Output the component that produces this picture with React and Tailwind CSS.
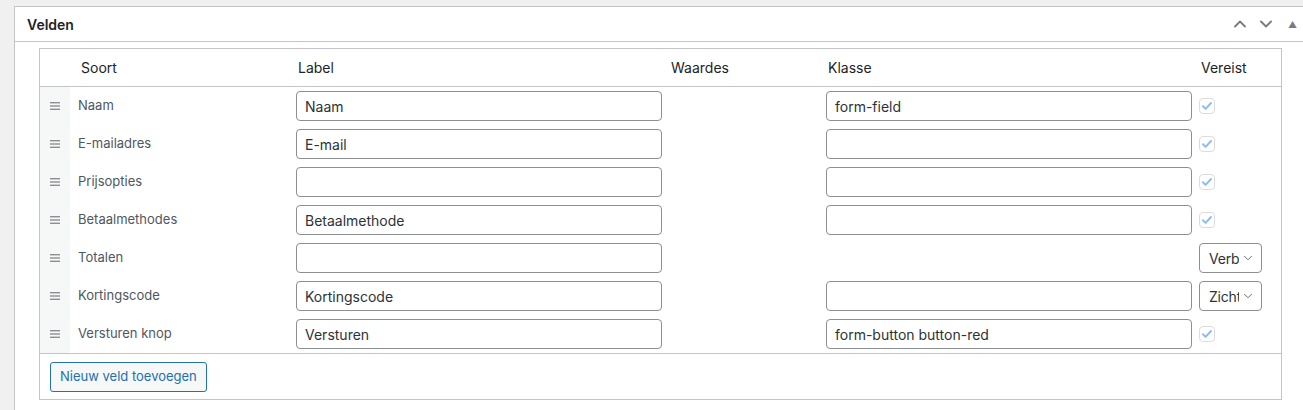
import { ChevronDown, ChevronUp } from "lucide-react"

const FIELDS = [
  { type: "Naam", label: "Naam", cls: "form-field", required: "check" },
  { type: "E-mailadres", label: "E-mail", cls: "", required: "check" },
  { type: "Prijsopties", label: "", cls: "", required: "check" },
  { type: "Betaalmethodes", label: "Betaalmethode", cls: "", required: "check" },
  { type: "Totalen", label: "", cls: null, required: "Verb" },
  { type: "Kortingscode", label: "Kortingscode", cls: "", required: "Zichtbaar" },
  { type: "Versturen knop", label: "Versturen", cls: "form-button button-red", required: "check" },
]

const COLS = "grid grid-cols-[30px_218px_375px_155px_373px_1fr]"

function TextInput({ value }) {
  return (
    <div className="flex h-[30px] w-[366px] items-center rounded-[4px] border border-[#8c8f94] bg-white px-2 text-[14px] text-[#2c3338]">
      {value}
    </div>
  )
}

function DisabledCheck() {
  return (
    <span className="grid h-4 w-4 place-items-center rounded-[4px] border border-[#dcdcde] bg-white">
      <svg width="12" height="12" viewBox="0 0 12 12" fill="none">
        <path d="M2 6.3l2.6 2.6L10 3" stroke="#8fbdec" strokeWidth="2" strokeLinecap="round" strokeLinejoin="round" />
      </svg>
    </span>
  )
}

function SmallSelect({ value }) {
  return (
    <div className="flex h-[30px] w-[63px] items-center rounded-[4px] border border-[#8c8f94] bg-white pl-[9px] pr-[6px] text-[14px] text-[#2c3338]">
      <span className="w-[30px] overflow-hidden whitespace-nowrap tracking-[-0.2px]">{value}</span>
      <ChevronDown size={14} strokeWidth={1.5} className="ml-auto text-[#50575e]" />
    </div>
  )
}

function DragHandle() {
  return (
    <svg width="10" height="8" viewBox="0 0 10 8">
      <rect x="0" y="0" width="10" height="1.4" fill="#8c8f94" />
      <rect x="0" y="3.3" width="10" height="1.4" fill="#8c8f94" />
      <rect x="0" y="6.6" width="10" height="1.4" fill="#8c8f94" />
    </svg>
  )
}

export default function App() {
  return (
    <div
      className="h-[410px] w-[1303px] overflow-hidden bg-[#f0f0f1] pl-[14px] pt-[6px]"
      style={{ fontFamily: "Inter, 'Noto Sans', sans-serif" }}
    >
      <div className="w-[1320px] border border-[#c3c4c7] bg-white pb-3">
        <div className="flex h-[35px] items-center border-b border-[#c3c4c7] pl-3 pr-[36px]">
          <h2 className="text-[14px] font-semibold text-[#1d2327]">Velden</h2>
          <div className="ml-auto flex items-center gap-[6px] text-[#787c82]">
            <ChevronUp size={20} strokeWidth={2.25} />
            <ChevronDown size={20} strokeWidth={2.25} />
            <span className="ml-[6px] text-[9px] leading-none">▲</span>
          </div>
        </div>

        <div className="ml-6 mt-[6px] w-[1243px] border border-[#c3c4c7]">
          <div className={`${COLS} h-[38px] items-center border-b border-[#c3c4c7] text-[14px] text-[#1d2327]`}>
            <div />
            <div className="pl-[11px]">Soort</div>
            <div className="pl-[10px]">Label</div>
            <div className="pl-2">Waardes</div>
            <div className="pl-[10px]">Klasse</div>
            <div className="pl-[10px]">Vereist</div>
          </div>

          {FIELDS.map((f) => (
            <div key={f.type} className={`${COLS} h-[38px] items-center`}>
              <div className="flex h-full items-center bg-[#f6f7f7] pl-[10px]">
                <DragHandle />
              </div>
              <div className="pl-2 text-[13px] text-[#50575e]">{f.type}</div>
              <div className="pl-2">
                <TextInput value={f.label} />
              </div>
              <div />
              <div className="pl-2">{f.cls !== null && <TextInput value={f.cls} />}</div>
              <div className="pl-2">
                {f.required === "check" ? <DisabledCheck /> : <SmallSelect value={f.required} />}
              </div>
            </div>
          ))}

          <div className="border-t border-[#c3c4c7] pb-[7px] pl-[10px] pt-2">
            <button className="h-[30px] rounded-[3px] border border-[#2271b1] bg-[#f6f7f7] px-[9px] text-[13px] text-[#2271b1]">
              Nieuw veld toevoegen
            </button>
          </div>
        </div>
      </div>
    </div>
  )
}
